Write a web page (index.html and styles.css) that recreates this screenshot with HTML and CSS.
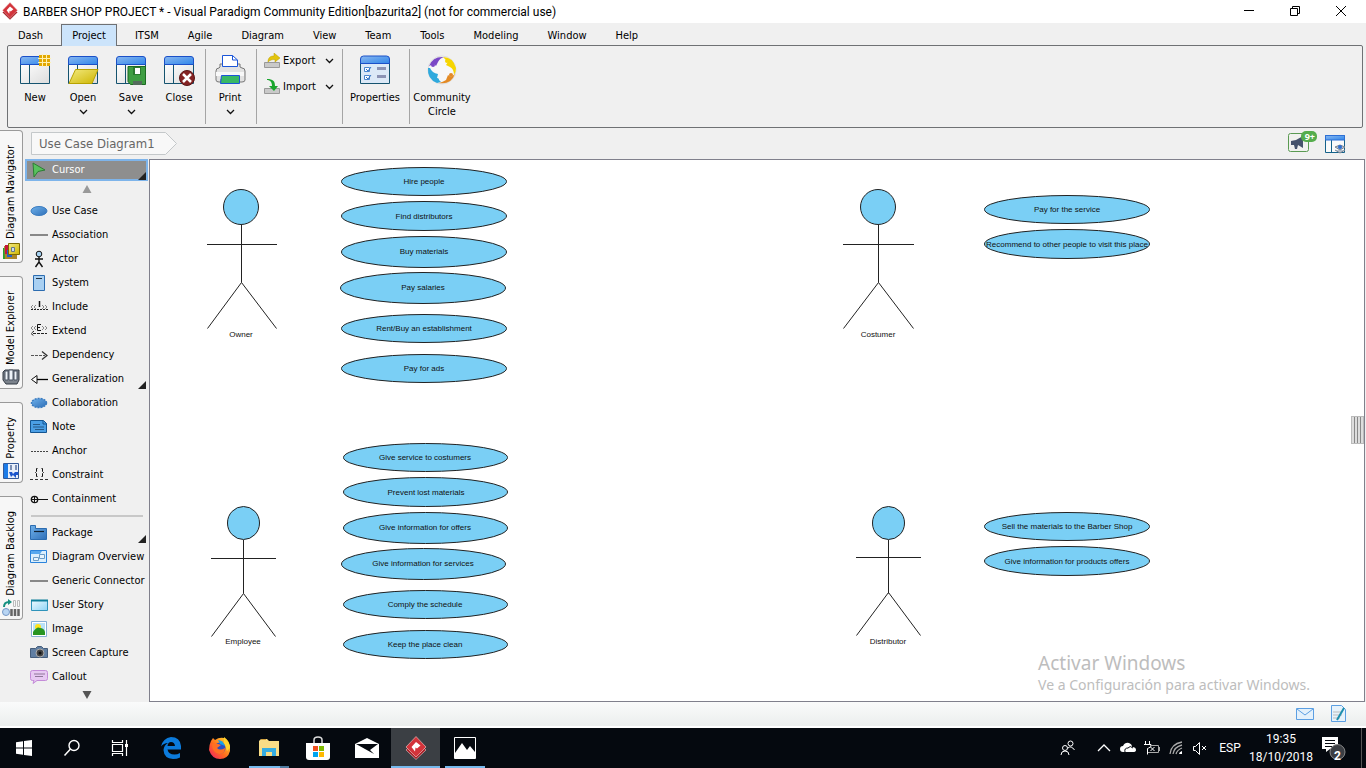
FILE: index.html
```html
<!DOCTYPE html>
<html lang="en">
<head>
<meta charset="utf-8">
<title>BARBER SHOP PROJECT * - Visual Paradigm Community Edition</title>
<link rel="stylesheet" href="styles.css">
</head>
<body>
<svg class="defs" width="0" height="0" aria-hidden="true">
  <defs>
    <linearGradient id="bar" x1="0" y1="0" x2="1" y2="1"><stop offset="0" stop-color="#8ab8f0"/><stop offset="1" stop-color="#2f86ea"/></linearGradient>
    <linearGradient id="pane" x1="0" y1="0" x2="1" y2="1"><stop offset="0" stop-color="#fff"/><stop offset="1" stop-color="#dcdcdc"/></linearGradient>
    <linearGradient id="gold" x1="0" y1="0" x2="1" y2="1"><stop offset="0" stop-color="#f3ea80"/><stop offset="1" stop-color="#cdb500"/></linearGradient>
    <linearGradient id="blue" x1="0" y1="0" x2="1" y2="1"><stop offset="0" stop-color="#6fb1ea"/><stop offset="1" stop-color="#2f6fb8"/></linearGradient>
    <linearGradient id="pale" x1="0" y1="0" x2="1" y2="1"><stop offset="0" stop-color="#eefaff"/><stop offset="1" stop-color="#8fd4f5"/></linearGradient>
    <linearGradient id="fox" x1="0" y1="1" x2="1" y2="0"><stop offset="0" stop-color="#f0196b"/><stop offset=".45" stop-color="#ff6a1e"/><stop offset="1" stop-color="#ffe22b"/></linearGradient>
    <symbol id="window" viewBox="0 0 32 32">
      <path d="M1.500 9h29v20.500h-29z" fill="url(#pane)" stroke="#15536f"/>
      <path d="M10.500 10v19" stroke="#15536f"/>
      <path d="M1.500 10.500V5q0-2.500 2.500-2.500h24q2.500 0 2.500 2.500v5.500z" fill="url(#bar)" stroke="#1b50c8"/>
    </symbol>
    <symbol id="vp" viewBox="0 0 24 24">
      <path d="M12 4 22 14 12 23.500 2 14z" fill="#a81f26" stroke="#e8c9c9" stroke-width=".6"/>
      <path d="M12 .5 22 11 12 21 2 11z" fill="#d3343b" stroke="#f0d0d0" stroke-width=".6"/>
      <path d="M12 6l4.500 3.500-3.500 3-1.500-1-.5 4-3.500-4.500z" fill="#fff"/>
    </symbol>
    <symbol id="down" viewBox="0 0 9 6"><path d="M1 1l3.500 3.500L8 1" fill="none" stroke="#111" stroke-width="1.300"/></symbol>
  </defs>
</svg>

<header class="titlebar">
  <svg class="app-icon" width="18" height="18"><use href="#vp"/></svg>
  <h1>BARBER SHOP PROJECT * - Visual Paradigm Community Edition[bazurita2] (not for commercial use)</h1>
  <div class="window-controls">
    <button aria-label="Minimize"><svg width="12" height="12"><path d="M1 5.500h10" stroke="#000"/></svg></button>
    <button aria-label="Restore"><svg width="12" height="12"><path d="M1.500 3.500h7v7h-7zM3.500 3V1.500h7v7H9" fill="none" stroke="#000"/></svg></button>
    <button aria-label="Close"><svg width="12" height="12"><path d="M1 1l10 10M11 1 1 11" stroke="#000"/></svg></button>
  </div>
</header>

<nav class="menu" aria-label="Main menu">
  <button>Dash</button><button class="selected">Project</button><button>ITSM</button><button>Agile</button><button>Diagram</button><button>View</button><button>Team</button><button>Tools</button><button>Modeling</button><button>Window</button><button>Help</button>
</nav>

<section class="ribbon" aria-label="Project tools">
  <div class="group">
    <button class="tool"><svg width="32" height="32"><use href="#window"/><path d="M20 1h11v11H20z" fill="#e3a800"/><path d="M19 4.500h13M19 8.500h13M23.500 0v13M27.500 0v13" stroke="#fff2b0"/></svg>New</button>
    <button class="tool"><svg width="32" height="32"><path d="M1 5h7v24H1z" fill="#a9a9a9"/><use href="#window"/><path d="M8.500 15.500H31L25 29.500H2z" fill="url(#gold)" stroke="#b7a200"/></svg>Open<svg class="arrow"><use href="#down"/></svg></button>
    <button class="tool"><svg width="32" height="32"><use href="#window"/><path d="M13 12.500h17.500v18H15.500l-2.500-3z" fill="#3f9e43" stroke="#1c6b22"/><path d="M18 13h8v8h-8z" fill="#2b7a30"/><path d="M20 14h5v6h-5z" fill="#fff"/><path d="M18 27h9v4h-9z" fill="#536b5c"/></svg>Save<svg class="arrow"><use href="#down"/></svg></button>
    <button class="tool"><svg width="32" height="32"><use href="#window"/><circle cx="24" cy="24" r="7.500" fill="#842323" stroke="#5a1515"/><path d="M20 20l8 8M28 20l-8 8" stroke="#fff" stroke-width="2.500"/></svg>Close</button>
  </div>
  <div class="group">
    <button class="tool"><svg width="32" height="32"><path d="M6 13V10h20v3l2 1q3 0 3 3v9q0 2-3 2h-3v-3H7v3H5q-3 0-3-2v-9q0-3 3-3z" fill="#e2e2e2" stroke="#777"/><path d="M2 18h28v4H2z" fill="#f8f8f8"/><path d="M8.500 12.500V1.500h10L23.500 6v6.500z" fill="#fff" stroke="#1a55d8"/><path d="M18.500 1.500V6h5" fill="none" stroke="#1a55d8"/><path d="M7.500 21.500h18v8H6.500z" fill="#38b865" stroke="#1a55d8"/></svg>Print<svg class="arrow"><use href="#down"/></svg></button>
  </div>
  <div class="group stack">
    <button class="small"><svg width="16" height="16"><path d="M.5 9.500h15v5H.5z" fill="#c9c9c9" stroke="#999"/><path d="M4 9C4 4 7 3 10 3V0l6 5-5 4V6.500C8 6.500 6 7 4 9z" fill="#e3c40b" stroke="#b99e00" stroke-width=".5"/></svg><span>Export</span><svg class="arrow"><use href="#down"/></svg></button>
    <button class="small"><svg width="16" height="16"><path d="M.5 9.500h15v5H.5z" fill="#c9c9c9" stroke="#999"/><path d="M3 0c6 0 8 2 8 7h3l-4 5-5-5h3C8 3 6 1 3 1z" fill="#19a52d"/></svg><span>Import</span><svg class="arrow"><use href="#down"/></svg></button>
  </div>
  <div class="group wide">
    <button class="tool"><svg width="32" height="32"><path d="M1.500 9h29v20.500h-29z" fill="#dce9f7" stroke="#15536f"/><path d="M1.500 9.500V5q0-3 3-3h23q3 0 3 3v4.500z" fill="url(#bar)" stroke="#1b50c8"/><path d="M5.500 13.500h5v4h-5zM5.500 21.500h5v4h-5z" fill="#fff" stroke="#4a86cf"/><path d="M7 15l2 2 3-4M7 23l2 2 3-4" fill="none" stroke="#3374c4"/><path d="M18 13h9v3h-9zM18 21h9v3h-9z" fill="#8b93b5"/></svg>Properties</button>
  </div>
  <div class="group wide">
    <button class="tool"><svg width="32" height="32"><circle cx="16" cy="16" r="14" fill="#f7f7f7" stroke="#ddd"/><path d="M3 12Q7 2 18 3q-4 1-6 5l-2 4-2-2z" fill="#7a48c6"/><path d="M17 3q10 0 13 11 0 4-2 7 0-6-4-8l-4-2 2-3z" fill="#f6d500"/><path d="M2 14q-1 11 9 15l4-1-4-4 1-4q-6-1-8-6z" fill="#2fa9dd"/><path d="M13 29q12 2 16-9l-4 3-3-2-2 5q-3 2-7 3z" fill="#e38a24"/><circle cx="7" cy="11" r="2" fill="#7a48c6"/><circle cx="21" cy="7" r="2" fill="#f6d500"/><circle cx="11" cy="26" r="2" fill="#2fa9dd"/><circle cx="25" cy="21" r="2" fill="#e38a24"/></svg>Community Circle</button>
  </div>
</section>

<div class="workspace">
  <aside class="dock">
    <button><span>Diagram Navigator</span><svg width="18" height="18"><path d="M1 6h3v11H1z" fill="#23a12e"/><path d="M2 4h13v13H3z" fill="#a9852a"/><path d="M3 3h4v9H3z" fill="#c7163c"/><path d="M5 8h5v7H5z" fill="#2460c8"/><path d="M6.500 1.500h11v11h-11z" fill="url(#gold)" stroke="#7d6a00"/><path d="M9.500 5.500h3v4h-3z" fill="#cde" stroke="#678"/></svg></button>
    <button><span>Model Explorer</span><svg width="18" height="18"><path d="M1 4l2-2h14v10l-2 4H4L1 12z" fill="#7c838c" stroke="#333a44"/><path d="M3 3h3v9H3zM7 2h4v10H7zM12 3h3v9h-3z" fill="#eef3f8" stroke="#4b5563"/></svg></button>
    <button><span>Property</span><svg width="18" height="18"><path d="M1.500 1.500h15v15h-15z" fill="#e8effa" stroke="#345a9a"/><path d="M2 2h4v14H2z" fill="#1d7ce8"/><path d="M8 3h2v5H8zM13 3h2v5h-2z" fill="#7b8fb5"/><path d="M7 10h3l1 2 2-2h3v3h-2v3l-3-3-2 2z" fill="#1b55cc"/></svg></button>
    <button><span>Diagram Backlog</span><svg width="18" height="18"><path d="M2 8c0-4 2-5 5-5" fill="none" stroke="#169080" stroke-width="2"/><path d="M6 0l4 3-4 3z" fill="#169080"/><path d="M11.500 1.500h2v6h-2zM15.500 1.500h2v6h-2z" fill="none" stroke="#bbb"/><path d="M9.500 10v7M13 10v7M16.500 10v7" stroke="#666" stroke-width="2.500"/><circle cx="4" cy="13" r="3.500" fill="#b8d5f3" stroke="#7597c5"/></svg></button>
  </aside>

  <div class="editor">
    <div class="crumbs">
      <button class="crumb"><svg width="147" height="23"><path d="M.5.5h134l11 11-11 11H.5z" fill="#f8f8f8" stroke="#c4c8ca"/></svg><span>Use Case Diagram1</span></button>
      <div class="crumb-tools">
        <button aria-label="Announcements"><svg width="30" height="26" viewBox="0 4 30 26"><rect x="1.500" y="6.500" width="20" height="18" rx="2" fill="#f0f1ee" stroke="#5a9a52"/><path d="M4 14l5-1 7-4v12l-5-3-1 4H8l-1-4H4z" fill="#46536b"/><rect x="14" y="4" width="16" height="11" rx="5" fill="#55ad4d"/></svg><b>9+</b></button>
        <button aria-label="Diagram layers"><svg width="20" height="20"><path d="M.5 1.500h19v17H.5z" fill="#fafafa" stroke="#15628a"/><path d="M6.500 6v12" stroke="#15628a"/><path d="M.5 1.500h19V6H.5z" fill="url(#bar)" stroke="#2d6fd5"/><path d="M10 13l5-2 5 2-5 3zM10 16l5 3 5-3" fill="#b8c2cf" stroke="#7b8593"/><circle cx="15" cy="13" r="2" fill="#2e6ed0"/></svg></button>
      </div>
    </div>

    <div class="stage">
      <div class="palette">
        <button class="item cursor"><svg width="18" height="18"><path d="M3 2l12 7-7 1.500L4 16z" fill="#58c25d" stroke="#2d7e34"/></svg>Cursor<i></i></button>
        <button class="scroll up" aria-label="Scroll up"><svg width="10" height="8"><path d="M5 0l4.500 8h-9z" fill="#999"/></svg></button>
        <button class="item"><svg width="18" height="18"><ellipse cx="9" cy="9" rx="8" ry="4.500" fill="url(#blue)" stroke="#3b7cc0"/></svg>Use Case</button>
        <button class="item"><svg width="18" height="18"><path d="M0 9h18" stroke="#888" stroke-width="2"/></svg>Association</button>
        <button class="item"><svg width="18" height="18"><path d="M9 7v6M5 9h8M9 12l-3.500 5M9 12l3.500 5" fill="none" stroke="#111" stroke-width="1.400"/><circle cx="9" cy="4" r="2.800" fill="#a6d2f2" stroke="#111"/></svg>Actor</button>
        <button class="item"><svg width="18" height="18"><path d="M3.500 1.500h11v15h-11z" fill="#a9d0f2" stroke="#2c6cb0"/><path d="M6 4.500h6" stroke="#234"/></svg>System</button>
        <button class="item"><svg width="18" height="18"><path d="M3 7l-2 2 2 2M6 7L4 9l2 2M12 7l2 2-2 2M15 7l2 2-2 2" fill="none" stroke="#888"/><path d="M9.500 3v6" stroke="#111" stroke-width="1.500"/><path d="M1 11.500h17" stroke="#222" stroke-dasharray="2 1"/></svg>Include</button>
        <button class="item"><svg width="18" height="18"><path d="M3 4L1 6l2 2M6 4L4 6l2 2M12 4l2 2-2 2M15 4l2 2-2 2" fill="none" stroke="#888"/><path d="M11 2.500H7.500v6H11M7.500 5.500H10" fill="none" stroke="#111"/><path d="M3 11.500h14M4 9l-3 2.500L4 14" fill="none" stroke="#222" stroke-dasharray="3 1"/></svg>Extend</button>
        <button class="item"><svg width="18" height="18"><path d="M1 9.500h14" stroke="#555" stroke-dasharray="3 1"/><path d="M12 5.500l5 4-5 4" fill="none" stroke="#333" stroke-width="1.300"/></svg>Dependency</button>
        <button class="item"><svg width="18" height="18"><path d="M7 9.500h11" stroke="#000" stroke-width="1.300"/><path d="M7 5.500v8l-5.500-4z" fill="#fff" stroke="#111"/></svg>Generalization<i></i></button>
        <button class="item"><svg width="18" height="18"><ellipse cx="9" cy="9" rx="7.500" ry="4.500" fill="url(#blue)" stroke="#3b7cc0" stroke-dasharray="2 1" stroke-width="1.500"/></svg>Collaboration</button>
        <button class="item"><svg width="18" height="18"><path d="M.5 2.500h13l3 3v9H.5z" fill="#4b9fe5" stroke="#145591"/><path d="M13 3v3h4" fill="none" stroke="#145591"/><path d="M3 6.500h7M3 9h11M5 11.500h9" stroke="#275987"/></svg>Note</button>
        <button class="item"><svg width="18" height="18"><path d="M1 9.500h17" stroke="#444" stroke-dasharray="2 1"/></svg>Anchor</button>
        <button class="item"><svg width="18" height="18"><path d="M7.500 2.500H6.500v3l-1 1 1 1v3h1M11.500 2.500h1v3l1 1-1 1v3h-1" fill="none" stroke="#111"/><path d="M0 13.500h18" stroke="#333" stroke-dasharray="3 2"/></svg>Constraint</button>
        <button class="item"><svg width="18" height="18"><circle cx="4.500" cy="9.500" r="3.200" fill="none" stroke="#111" stroke-width="1.300"/><path d="M1 9.500h17M4.500 6v7" stroke="#111"/></svg>Containment</button>
        <hr>
        <button class="item"><svg width="18" height="18"><path d="M.5 1.500h5v3h11v11H.5z" fill="url(#blue)" stroke="#2c6cb0"/><path d="M4 7.500h10" stroke="#123" stroke-width="1.200"/></svg>Package<i></i></button>
        <button class="item"><svg width="18" height="18"><path d="M.5 2.500h16v12H.5z" fill="#dceffc" stroke="#2a83db"/><path d="M1 3h11l-2 3H1z" fill="#58a8ee"/><path d="M3.500 9.500h5v3h-5zM9.500 6.500h5v4h-5z" fill="#e9f5fd" stroke="#6b9cc6"/></svg>Diagram Overview</button>
        <button class="item"><svg width="18" height="18"><path d="M0 9h18" stroke="#888" stroke-width="2"/></svg>Generic Connector</button>
        <button class="item"><svg width="18" height="18"><path d="M1.500 4.500h16v10h-16z" fill="url(#pale)" stroke="#2f93ba"/><path d="M1 4.500h17" stroke="#0e7f9b" stroke-width="2"/></svg>User Story</button>
        <button class="item"><svg width="18" height="18"><path d="M1.500 1.500h15v15h-15z" fill="#fff" stroke="#86afd5"/><path d="M3 3h12v12H3z" fill="#b9e1f9"/><circle cx="8" cy="7" r="3" fill="#ffe21a"/><path d="M3 12q4-6 7-4 4 0 5 4v3H3z" fill="#289522"/></svg>Image</button>
        <button class="item"><svg width="18" height="18"><path d="M.5 4.500h5l2-2h4l2 2h4v9H.5z" fill="#617fa3" stroke="#455d7b"/><circle cx="10" cy="9" r="4" fill="#444" stroke="#aaa"/><circle cx="10" cy="9" r="1.500" fill="#111"/></svg>Screen Capture</button>
        <button class="item"><svg width="18" height="18"><path d="M2.500 2.500h13q2 0 2 2v6q0 2-2 2H7l-4 3 1-3H2.500q-2 0-2-2v-6q0-2 2-2z" fill="#e7c9f2" stroke="#c48bd8"/><path d="M4 6h11M5 8.500h8" stroke="#8f7699"/></svg>Callout</button>
        <button class="scroll" aria-label="Scroll down"><svg width="10" height="8"><path d="M.5 0h9L5 8z" fill="#555"/></svg></button>
      </div>

      <main class="canvas">
        <svg class="diagram" role="img" aria-label="Barber shop use case diagram">
          <g class="actor">
            <ellipse cx="91" cy="47" rx="17.500" ry="17.500"/><path d="M91.500 65v57.500M57 84.500h70M57.500 168.500l34-46 35 46"/><text x="91" y="177">Owner</text>
            <ellipse cx="728" cy="47" rx="17.500" ry="17.500"/><path d="M728.500 65v57.500M693 84.500h71M693.500 168.500l35-46 35 46"/><text x="728" y="177">Costumer</text>
            <ellipse cx="93.500" cy="363" rx="16" ry="16.500"/><path d="M93.500 380v53.500M61 398.500h65M61.500 476.500l32-43 32 43"/><text x="93" y="484">Employee</text>
            <ellipse cx="738.500" cy="363" rx="16" ry="16.500"/><path d="M738.500 380v53.500M706 397.500h65M706.500 475.500l32-43 32 43"/><text x="738" y="484">Distributor</text>
          </g>
          <g class="usecase">
            <ellipse cx="274" cy="21.500" rx="82.500" ry="14"/><text x="274" y="24">Hire people</text>
            <ellipse cx="274" cy="56" rx="82.500" ry="14.500"/><text x="274" y="59">Find distributors</text>
            <ellipse cx="274" cy="92" rx="82.500" ry="15.500"/><text x="274" y="94">Buy materials</text>
            <ellipse cx="273" cy="128" rx="82.500" ry="15.500"/><text x="273" y="130">Pay salaries</text>
            <ellipse cx="274" cy="168.500" rx="82.500" ry="14"/><text x="274" y="171">Rent/Buy an establishment</text>
            <ellipse cx="274" cy="208.500" rx="82.500" ry="14"/><text x="274" y="211">Pay for ads</text>
            <ellipse cx="275.500" cy="297.500" rx="82" ry="14"/><text x="275" y="300">Give service to costumers</text>
            <ellipse cx="275.500" cy="332" rx="82" ry="14.500"/><text x="276" y="335">Prevent lost materials</text>
            <ellipse cx="275.500" cy="368" rx="82" ry="15.500"/><text x="275" y="370">Give information for offers</text>
            <ellipse cx="273.500" cy="404" rx="82" ry="15.500"/><text x="273" y="406">Give information for services</text>
            <ellipse cx="275.500" cy="444.500" rx="82" ry="14"/><text x="275" y="447">Comply the schedule</text>
            <ellipse cx="275.500" cy="484.500" rx="82" ry="14"/><text x="275" y="487">Keep the place clean</text>
            <ellipse cx="917" cy="49.500" rx="82.500" ry="14"/><text x="917" y="52">Pay for the service</text>
            <ellipse cx="917" cy="84" rx="82.500" ry="14.500"/><text x="917" y="87">Recommend to other people to visit this place</text>
            <ellipse cx="917" cy="366.500" rx="82.500" ry="14"/><text x="917" y="369">Sell the materials to the Barber Shop</text>
            <ellipse cx="917" cy="401" rx="82.500" ry="14.500"/><text x="917" y="404">Give information for products offers</text>
          </g>
        </svg>
        <button class="handle" aria-label="Open side panel"></button>
        <div class="watermark"><strong>Activar Windows</strong><p>Ve a Configuración para activar Windows.</p></div>
      </main>
    </div>
  </div>
</div>

<div class="status">
  <button aria-label="Messages"><svg width="18" height="12"><path d="M.5.5h17v11H.5z" fill="#e4f1fb" stroke="#5b9fe3"/><path d="M1 1l8 6 8-6" fill="none" stroke="#5b9fe3"/></svg></button>
  <button aria-label="Notes"><svg width="17" height="18"><path d="M1.500.5h10l4 4v12h-14z" fill="#e6f2fb" stroke="#5b9fe3"/><path d="M3 7h8M3 10h9M3 13h7" stroke="#bbb"/><path d="M14 3L7 15" stroke="#1d8fae" stroke-width="2"/></svg></button>
</div>

<footer class="taskbar">
  <div class="start">
    <button aria-label="Start"><svg width="16" height="16"><path d="M0 2.200l7-.9v6.200H0zM8 1.100L16 0v7.500H8zM0 8.500h7v6.200l-7-.9zM8 8.500h8V16l-8-1.100z" fill="#fff"/></svg></button>
    <button aria-label="Search"><svg width="18" height="18"><circle cx="11" cy="6.500" r="5" fill="none" stroke="#fff" stroke-width="1.400"/><path d="M7.500 10L1.500 16.500" stroke="#fff" stroke-width="1.500"/></svg></button>
    <button aria-label="Task view"><svg width="18" height="18"><path d="M1.500 1v2.500h10V1M1.500 17v-2.500h10V17M1.500 5.500h10v7h-10zM15.500 1v16" fill="none" stroke="#fff" stroke-width="1.200"/><path d="M14 5h3v3h-3z" fill="#fff"/></svg></button>
  </div>
  <div class="apps">
    <button aria-label="Edge"><svg width="22" height="22"><path d="M1 9.500Q3 1 11 0q9 0 10 9v3.500H7.500q1 5 7 5 3 0 5.500-1.500v4.500Q17 22 13 22 4 21.500 3.500 13 4 8 8 6 3.500 6 1 9.500zM7.500 9H15q-.5-4-4-4-3 0-3.500 4z" fill="#0c7bdc"/></svg></button>
    <button aria-label="Firefox"><svg width="24" height="24"><path d="M3 5l2-3 2 2q4-3 9-2l3 2 3 6v5q-2 8-10 8T1 14q0-5 2-9z" fill="url(#fox)"/><path d="M16 1q6 4 6 11l-3 3-3-8z" fill="#ffd22e"/><circle cx="12" cy="12" r="5.500" fill="#2a4fc4"/><path d="M4 8q5-1 9 1l-4 3q3 3 8 0 0 6-6 6-7-2-7-10z" fill="#ff6f24"/><path d="M10 4q5 0 7 6l-5-2z" fill="#16a0ea"/></svg></button>
    <button class="open" aria-label="File Explorer"><svg width="22" height="20"><path d="M1 3l2-2h6l2 2h10v15H1z" fill="#f8dc86"/><path d="M3 1.500h5" stroke="#d2a13c"/><path d="M4 10h14v8h-4v-4H8v4H4z" fill="#35ace1"/></svg></button>
    <button aria-label="Store"><svg width="24" height="24"><path d="M8 7V4q0-3 4-3t4 3v3" fill="none" stroke="#ddd" stroke-width="1.500"/><path d="M0 7h24v14q0 3-3 3H3q-3 0-3-3z" fill="#fff"/><path d="M7 10h5v5H7z" fill="#f05020"/><path d="M13 10h5v5h-5z" fill="#7fba00"/><path d="M7 16h5v5H7z" fill="#00a4ef"/><path d="M13 16h5v5h-5z" fill="#ffb900"/></svg></button>
    <button aria-label="Mail"><svg width="24" height="20"><path d="M0 6L12 0l12 6v14H0z" fill="#fff"/><path d="M1 6h22l-8 6 4 4-18-10z" fill="#05090f"/></svg></button>
    <button class="active" aria-label="Visual Paradigm"><svg width="24" height="24"><use href="#vp"/></svg></button>
    <button class="open single" aria-label="Photos"><svg width="22" height="22"><path d="M.5.500h21v21H.5z" fill="none" stroke="#fff"/><path d="M1 16l7-10 5 7 3-4 5 6v6H1z" fill="#fff"/></svg></button>
  </div>
  <div class="tray">
    <button class="people" aria-label="People"><svg width="16" height="16"><circle cx="10.500" cy="3.500" r="2.500" fill="none" stroke="#fff"/><circle cx="5" cy="8" r="2.500" fill="none" stroke="#fff"/><path d="M1 15q0-4 4-4t4 4M8 8q3-3 6.500 2" fill="none" stroke="#fff"/></svg></button>
    <button aria-label="Hidden icons"><svg width="14" height="16"><path d="M1 11l6-6 6 6" fill="none" stroke="#fff" stroke-width="1.300"/></svg></button>
    <button aria-label="OneDrive"><svg width="16" height="16"><path d="M3 12q-3 0-3-3t3-3q2-4 6-3 3 1 3 4 4 0 4 3 0 2-3 2z" fill="#fff"/><path d="M5 12q-1-4 3-4 2-3 5 0" fill="none" stroke="#05090f"/></svg></button>
    <button aria-label="Battery"><svg width="16" height="16"><path d="M1.500 1v4M5.500 1v4M0 4.500h7v2q-3 2-3.500 2v6" fill="none" stroke="#fff"/><path d="M6 5.500h8.500v7H4M15.500 7v4" fill="none" stroke="#aaa"/><path d="M6.500 7l4 4M10.500 7l-4 4" stroke="#fff"/></svg></button>
    <button aria-label="Network"><svg width="16" height="16"><path d="M2 14Q3 4 14 2M5 14q1-7 9-9M8 14q1-4 6-6" fill="none" stroke="#aaa" stroke-width="1.300"/><path d="M11 14q0-2 3-3v3z" fill="#fff"/></svg></button>
    <button aria-label="Volume"><svg width="16" height="16"><path d="M1.500 6.500h2l4-4v12l-4-4h-2z" fill="none" stroke="#fff"/><path d="M10 6l4 4M14 6l-4 4" stroke="#fff"/></svg></button>
    <button class="lang">ESP</button>
    <button class="clock"><span>19:35</span><span>18/10/2018</span></button>
    <button class="notify" aria-label="Notifications"><svg width="26" height="26"><path d="M1 2h16v12H9l-4 3v-3H1z" fill="#fff"/><path d="M4 5.500h10M4 8.500h10M4 11.500h7" stroke="#05090f"/><circle cx="16.500" cy="17" r="7.500" fill="#3b3e43" stroke="#888"/></svg><b>2</b></button>
  </div>
</footer>
</body>
</html>
```

FILE: styles.css
```css
* { box-sizing: border-box; }

body {
  margin: 0;
  min-height: 100vh;
  display: flex;
  flex-direction: column;
  background: #f0f0f0;
  color: #000;
  font: 11px/14px "DejaVu Sans Condensed", "Noto Sans", sans-serif;
}

button {
  border: 0;
  padding: 0;
  background: none;
  color: inherit;
  font: inherit;
}

svg { display: block; flex: none; }
.defs { position: absolute; }

/* Title bar */
.titlebar {
  display: flex;
  align-items: center;
  height: 23px;
  padding: 0 2px 2px 1px;
  background: #fff;
}
.titlebar h1 {
  margin: 0 0 0 4px;
  padding-top: 2px;
  font: 12px/20px Roboto, sans-serif;
}
.window-controls { display: flex; margin-left: auto; }
.window-controls button {
  width: 46px;
  height: 20px;
  display: grid;
  place-items: center;
}

/* Menu tabs */
.menu { display: flex; gap: 7px; padding: 1px 7px 0; height: 22px; }
.menu button { padding: 1px 11px 0; height: 22px; }
.menu .selected {
  z-index: 1;
  border: 1px solid #6f7174;
  border-bottom: 0;
  background: #cce4fb;
  padding: 0 10px;
}

/* Ribbon */
.ribbon {
  display: flex;
  height: 83px;
  margin: 0 3px 0 7px;
  padding: 3px;
  border: 1px solid #6f7174;
  border-radius: 2px;
}
.group { display: flex; padding-right: 2px; border-right: 1px solid #a5a5a5; }
.group:last-child { border: 0; }
.tool {
  width: 48px;
  display: flex;
  flex-direction: column;
  align-items: center;
  padding-top: 5px;
  line-height: 14px;
}
.tool > svg:first-child { margin-bottom: 5px; }
.tool .arrow { margin-top: 4px; }
.arrow { width: 9px; height: 6px; }
.wide .tool { width: 64px; }
.stack { flex-direction: column; gap: 2px; width: 86px; padding: 0 8px 0 7px; }
.small { display: flex; align-items: center; height: 24px; text-align: left; }
.small span { flex: 1; padding-left: 3px; }

/* Workspace */
.workspace { flex: 1; display: flex; }
.dock {
  width: 25px;
  display: flex;
  flex-direction: column;
  gap: 13px;
  padding: 2px 2px 0 0;
}
.dock button {
  display: flex;
  flex-direction: column;
  align-items: center;
  gap: 3px;
  padding: 14px 0 2px;
  border: 1px solid #9a9a9a;
  border-left: 0;
  border-radius: 0 4px 4px 0;
  background: #f7f7f7;
}
.dock span { writing-mode: vertical-rl; transform: rotate(180deg); }
.editor { flex: 1; display: flex; flex-direction: column; }
.crumbs {
  display: flex;
  justify-content: space-between;
  align-items: center;
  height: 31px;
  padding: 0 21px 0 6px;
}
.crumb { display: grid; align-items: center; }
.crumb > * { grid-area: 1 / 1; }
.crumb span {
  padding-left: 8px;
  text-align: left;
  color: #666;
  font: 13px/20px "DejaVu Sans Condensed", sans-serif;
}
.crumb-tools { display: flex; align-items: center; gap: 8px; }
.crumb-tools button { position: relative; }
.crumb-tools b {
  position: absolute;
  top: 0;
  right: 2px;
  color: #fff;
  font: bold 9px/11px "Noto Sans", sans-serif;
}
.stage { flex: 1; display: flex; margin-right: 1px; }

/* Palette */
.palette { width: 124px; display: flex; flex-direction: column; }
.item {
  position: relative;
  height: 24px;
  display: flex;
  align-items: center;
  gap: 4px;
  padding-left: 5px;
  white-space: nowrap;
}
.item i {
  position: absolute;
  right: 3px;
  bottom: 2px;
  border: 4px solid #222;
  border-top-color: transparent;
  border-left-color: transparent;
}
.cursor {
  height: 22px;
  margin-right: 1px;
  padding-left: 3px;
  border: 2px solid #7eb4ea;
  background: #8e8e8e;
  color: #fff;
}
.cursor i { right: 0; bottom: -1px; }
.scroll { display: grid; place-items: center; height: 12px; }
.up { height: 18px; padding-bottom: 2px; }
.palette hr {
  margin: 4px 6px;
  border: 0;
  border-top: 2px solid #c8c8c8;
}

/* Canvas */
.canvas {
  position: relative;
  flex: 1;
  border: 1px solid #80808c;
  background: #fff;
}
.diagram { width: 100%; height: 100%; position: absolute; inset: 0; }
.diagram ellipse { fill: #7acff5; stroke: #222; }
.diagram path { fill: none; stroke: #222; }
.diagram text {
  fill: #111;
  font: 8px "Liberation Sans", sans-serif;
  text-anchor: middle;
}
.handle {
  position: absolute;
  right: 0;
  top: 256px;
  width: 13px;
  height: 28px;
  border: 1px solid #bbb;
  background: repeating-linear-gradient(90deg, #ddd 0 2px, #888 2px 3px);
}
.watermark {
  position: absolute;
  right: 54px;
  bottom: 6px;
  color: #bdbdbd;
  font-family: "Noto Sans", sans-serif;
}
.watermark strong { display: block; font-size: 19px; font-weight: 400; line-height: 24px; }
.watermark p { margin: 0; font-size: 14px; line-height: 20px; }

/* Status bar */
.status {
  display: flex;
  justify-content: flex-end;
  align-items: center;
  gap: 16px;
  height: 26px;
  padding-right: 19px;
  border-bottom: 2px solid #fff;
  background: linear-gradient(#fafbfb, #ebeeed);
}

/* Taskbar */
.taskbar {
  display: flex;
  height: 40px;
  background: #05090f;
  color: #fff;
  font: 12px/18px Roboto, sans-serif;
}
.start, .apps { display: flex; }
.apps { margin-left: 2px; }
.start button, .apps button { width: 48px; display: grid; place-items: center; }
.apps button { width: 49px; }
.apps .active { background: #3b3f44; box-shadow: inset 0 -2px #76b9ed; }
.apps .open {
  background: linear-gradient(90deg, #76b9ed 78%, #4f7ba0 78%) center bottom / 40px 2px no-repeat;
}
.apps .single { background-image: linear-gradient(#76b9ed, #76b9ed); }
.tray { display: flex; align-items: center; margin-left: auto; padding-right: 4px; }
.tray button { width: 24px; display: grid; place-items: center; }
.tray .people { width: 48px; }
.tray .lang { width: 36px; }
.tray .clock { width: 66px; display: flex; flex-direction: column; align-items: center; }
.tray .notify {
  position: relative;
  width: 48px;
  height: 40px;
  padding-right: 8px;
  border-right: 1px solid #555;
}
.notify b { position: absolute; right: 20px; bottom: 3px; font-weight: 700; }
```
